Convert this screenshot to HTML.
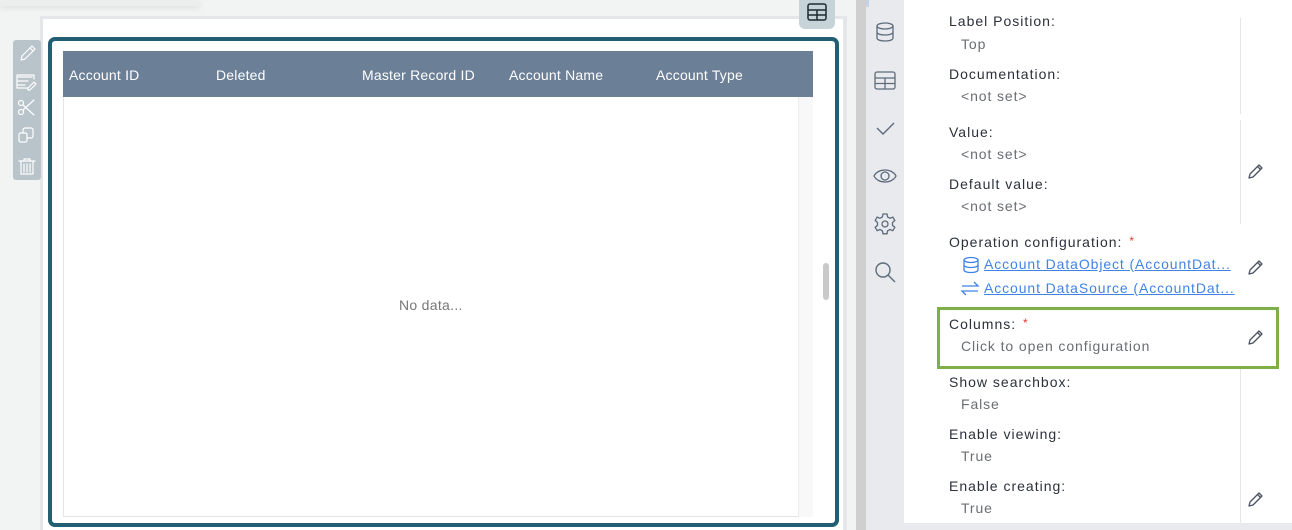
<!DOCTYPE html>
<html style="overflow:hidden;height:530px"><head><meta charset="utf-8"><style>
*{box-sizing:border-box;margin:0;padding:0}
body{width:1292px;height:530px;overflow:hidden;background:#f2f3f3;font-family:"Liberation Sans",sans-serif;position:relative}
.abs{position:absolute}
.lbl{position:absolute;left:949px;font-size:14px;color:#2b303b;letter-spacing:1px}
.val{position:absolute;left:961px;font-size:14px;color:#6a6d73;letter-spacing:.9px}
.th{position:absolute;top:67px;font-size:14px;color:#fff;letter-spacing:.2px}
.ic{position:absolute;left:873px}
.lnk{position:absolute;left:984px;font-size:14px;color:#3f84e5;text-decoration:underline;letter-spacing:.9px}
</style></head><body>
<div class="abs" style="left:0;top:0;width:200px;height:6px;background:#eceeee;box-shadow:0 2px 6px rgba(0,0,0,.08)"></div>
<div class="abs" style="left:40px;top:16px;width:807px;height:514px;background:#fff;border:3px solid #e4e6e9;border-bottom:none;border-right:4px solid #e4e6e9"></div>
<div class="abs" style="left:13px;top:40px;width:28px;height:140px;background:#b8c3ca;border-radius:3px"></div>
<svg class="abs" style="left:13px;top:40px" width="28" height="140" fill="none" stroke="#fff" stroke-width="1.2" stroke-linecap="round" stroke-linejoin="round">
<path d="M8 20 L9 16 L19 6 L22 9 L12 19 Z M17 8 L20 11"/>
<path d="M5 37 h14 M5 41 h10 M5 45 h7 M4 35 h17 v4 M4 35 v13 h10 M15 48 l6-6 2 2-6 6 h-2z"/>
<circle cx="8" cy="63" r="2.5"/><circle cx="8" cy="72" r="2.5"/><path d="M10 65 L21 75 M10 70 L21 60"/>
<rect x="6" y="93" width="8" height="9" rx="1.5"/><path d="M10 93 v-3 a2 2 0 0 1 2-2 h6 a2 2 0 0 1 2 2 v6 a2 2 0 0 1-2 2 h-4"/>
<path d="M6 121 h16 M11 121 v-2 h6 v2 M8 121 v13 h12 v-13 M11 124 v8 M14 124 v8 M17 124 v8"/>
</svg>
<div class="abs" style="left:48px;top:37px;width:791px;height:490px;border:4px solid #235f73;border-radius:7px;background:#fff"></div>
<div class="abs" style="left:63px;top:51px;width:750px;height:466px;border:1px solid #e3e5e8;background:#fff"></div>
<div class="abs" style="left:798px;top:97px;width:15px;height:420px;background:#f8f8f8;border-left:1px solid #ececec"></div>
<div class="abs" style="left:63px;top:51px;width:750px;height:46px;background:#6b7f96"></div>
<div class="th" style="left:69px">Account ID</div>
<div class="th" style="left:216px">Deleted</div>
<div class="th" style="left:362px">Master Record ID</div>
<div class="th" style="left:509px">Account Name</div>
<div class="th" style="left:656px">Account Type</div>
<div class="abs" style="left:399px;top:297px;font-size:14px;color:#777;letter-spacing:.3px">No data...</div>
<div class="abs" style="left:823px;top:263px;width:6px;height:37px;background:#c9c9c9;border-radius:3px"></div>
<div class="abs" style="left:799px;top:0;width:36px;height:29px;background:#c6d4da;border-radius:0 0 6px 6px"></div>
<svg class="abs" style="left:806px;top:3px" width="22" height="18" fill="none" stroke="#1f2a33" stroke-width="1.5"><rect x="2" y="1" width="18" height="16" rx="2"/><path d="M2 7 h18 M2 12 h18 M11 7 v10"/></svg>
<div class="abs" style="left:856px;top:0;width:10px;height:530px;background:#cfcfcf"></div>
<div class="abs" style="left:866px;top:0;width:38px;height:530px;background:#e8eaed"></div>
<div class="abs" style="left:866px;top:0;width:3px;height:7px;background:#c5d3e8"></div>
<svg class="ic" style="top:20px" width="24" height="24" fill="none" stroke="#5d6b7d" stroke-width="1.3"><ellipse cx="12" cy="6" rx="8" ry="3"/><path d="M4 6 v12 c0 4 16 4 16 0 v-12 M4 12 c0 4 16 4 16 0"/></svg>
<svg class="ic" style="top:69px" width="24" height="24" fill="none" stroke="#5d6b7d" stroke-width="1.3"><rect x="2" y="3" width="20" height="17" rx="2"/><path d="M2 9 h20 M2 14.5 h20 M12 9 v11"/></svg>
<svg class="ic" style="top:116px" width="24" height="24" fill="none" stroke="#5d6b7d" stroke-width="1.4"><path d="M4 12 l6 6 L21 7"/></svg>
<svg class="ic" style="top:164px" width="24" height="24" fill="none" stroke="#5d6b7d" stroke-width="1.3"><path d="M1 12 C5 4 19 4 23 12 C19 20 5 20 1 12 Z"/><circle cx="12" cy="12" r="4"/></svg>
<svg class="ic" style="top:212px" width="24" height="24" fill="none" stroke="#5d6b7d" stroke-width="1.3"><circle cx="12" cy="12" r="3"/><path d="M10 2 h4 l.6 3 2.4 1.3 2.8-1.2 2 3.4-2.3 2 v2.8 l2.3 2-2 3.4-2.8-1.2-2.4 1.3-.6 3 h-4 l-.6-3-2.4-1.3-2.8 1.2-2-3.4 2.3-2 v-2.8 l-2.3-2 2-3.4 2.8 1.2 2.4-1.3z"/></svg>
<svg class="ic" style="top:260px" width="24" height="24" fill="none" stroke="#5d6b7d" stroke-width="1.4"><circle cx="10" cy="10" r="7"/><path d="M15 15 l7 7"/></svg>
<div class="abs" style="left:904px;top:0;width:388px;height:523px;background:#fff"></div>
<div class="abs" style="left:904px;top:523px;width:388px;height:7px;background:#e8eaed"></div>
<div class="abs" style="left:1240px;top:18px;width:1px;height:96px;background:#e6e6e6"></div>
<div class="abs" style="left:1240px;top:120px;width:1px;height:104px;background:#e6e6e6"></div>
<div class="abs" style="left:1240px;top:368px;width:1px;height:155px;background:#e6e6e6"></div>
<div class="lbl" style="top:13px">Label Position:</div>
<div class="val" style="top:36px">Top</div>
<div class="lbl" style="top:66px">Documentation:</div>
<div class="val" style="top:88px">&lt;not set&gt;</div>
<div class="lbl" style="top:124px">Value:</div>
<div class="val" style="top:146px">&lt;not set&gt;</div>
<div class="lbl" style="top:176px">Default value:</div>
<div class="val" style="top:198px">&lt;not set&gt;</div>
<div class="lbl" style="top:234px">Operation configuration: <span style="color:#e53935;font-size:12px;vertical-align:top;margin-left:2px">*</span></div>
<svg class="abs" style="left:962px;top:256px" width="18" height="18" fill="none" stroke="#3f84e5" stroke-width="1.3"><ellipse cx="9" cy="4" rx="7" ry="2.5"/><path d="M2 4 v10 c0 3.3 14 3.3 14 0 v-10 M2 9 c0 3.3 14 3.3 14 0"/></svg>
<div class="lnk" style="top:256px">Account DataObject (AccountDat...</div>
<svg class="abs" style="left:960px;top:280px" width="20" height="18" fill="none" stroke="#3f84e5" stroke-width="1.3"><path d="M2 6 h16 l-4-4 M18 11 h-16 l4 4"/></svg>
<div class="lnk" style="top:280px">Account DataSource (AccountDat...</div>
<div class="abs" style="left:937px;top:307px;width:342px;height:62px;border:3px solid #7fb048"></div>
<div class="lbl" style="top:316px">Columns: <span style="color:#e53935;font-size:12px;vertical-align:top;margin-left:2px">*</span></div>
<div class="val" style="top:338px">Click to open configuration</div>
<div class="lbl" style="top:374px">Show searchbox:</div>
<div class="val" style="top:396px">False</div>
<div class="lbl" style="top:426px">Enable viewing:</div>
<div class="val" style="top:448px">True</div>
<div class="lbl" style="top:478px">Enable creating:</div>
<div class="val" style="top:500px">True</div>
<svg class="abs" style="left:1247px;top:162px" width="18" height="18" fill="none" stroke="#4a5160" stroke-width="1.3" stroke-linejoin="round"><path d="M2 16 L3 12 L12 3 L15 6 L6 15 Z M10.5 4.5 L13.5 7.5"/></svg>
<svg class="abs" style="left:1247px;top:258px" width="18" height="18" fill="none" stroke="#4a5160" stroke-width="1.3" stroke-linejoin="round"><path d="M2 16 L3 12 L12 3 L15 6 L6 15 Z M10.5 4.5 L13.5 7.5"/></svg>
<svg class="abs" style="left:1247px;top:328px" width="18" height="18" fill="none" stroke="#4a5160" stroke-width="1.3" stroke-linejoin="round"><path d="M2 16 L3 12 L12 3 L15 6 L6 15 Z M10.5 4.5 L13.5 7.5"/></svg>
<svg class="abs" style="left:1247px;top:490px" width="18" height="18" fill="none" stroke="#4a5160" stroke-width="1.3" stroke-linejoin="round"><path d="M2 16 L3 12 L12 3 L15 6 L6 15 Z M10.5 4.5 L13.5 7.5"/></svg>
</body></html>
